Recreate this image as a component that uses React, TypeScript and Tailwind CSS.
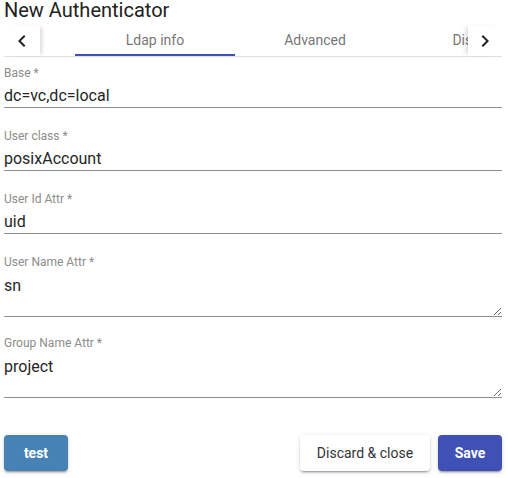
import React from 'react';

const tabs = ['Ldap info', 'Advanced', 'Display'];

function ChevronLeftIcon() {
  return (
    <svg width="24" height="24" viewBox="0 0 24 24" fill="#222">
      <path d="M15.41 7.41L14 6l-6 6 6 6 1.41-1.41L10.83 12z" />
    </svg>
  );
}

function ChevronRightIcon() {
  return (
    <svg width="24" height="24" viewBox="0 0 24 24" fill="#222">
      <path d="M10 6L8.59 7.41 13.17 12l-4.58 4.59L10 18l6-6z" />
    </svg>
  );
}

function TextField({ label, value, className }: { label: string; value: string; className?: string }) {
  return (
    <div className={`flex flex-col ${className ?? ''}`}>
      <label className="h-[14px] text-[12px] leading-[14px] text-[#8c8c8c]">{label}</label>
      <input
        type="text"
        defaultValue={value}
        className="mt-[6px] h-[22px] w-full border-b border-[#8f8f8f] pb-[2px] text-[16px] leading-[19px] text-[#262626] outline-none"
      />
    </div>
  );
}

function TextAreaField({ label, value, className }: { label: string; value: string; className?: string }) {
  return (
    <div className={`flex flex-col ${className ?? ''}`}>
      <label className="h-[14px] text-[12px] leading-[14px] text-[#8c8c8c]">{label}</label>
      <textarea
        defaultValue={value}
        className="mt-[6px] h-[42px] w-full resize-y border-b border-[#8f8f8f] pt-[1px] text-[16px] leading-[19px] text-[#262626] outline-none"
      />
    </div>
  );
}

export default function App() {
  const btnShadow =
    'shadow-[0_3px_1px_-2px_rgba(0,0,0,0.2),0_2px_2px_0_rgba(0,0,0,0.14),0_1px_5px_0_rgba(0,0,0,0.12)]';

  return (
    <div
      className="flex h-[478px] w-[508px] flex-col overflow-hidden bg-white pl-1 pr-[6px]"
      style={{ fontFamily: 'Roboto, "Liberation Sans", sans-serif' }}
    >
      <h1 className="h-[25px] text-[20px] leading-5 font-normal text-[#222]">New Authenticator</h1>

      {/* Tab bar */}
      <div className="flex h-[32px] border-b border-[#e0e0e0]">
        <button className="relative z-10 flex h-[31px] w-[36px] items-center justify-center bg-white shadow-[4px_0_4px_-2px_rgba(0,0,0,0.15)]">
          <ChevronLeftIcon />
        </button>
        <div className="flex flex-1 overflow-hidden pl-[35px]">
          {tabs.map((tab, i) => (
            <div
              key={tab}
              className="relative flex h-[31px] w-[160px] shrink-0 items-center justify-center text-[14px] text-[#777]"
            >
              {tab}
              {i === 0 && <div className="absolute bottom-0 left-0 h-[2px] w-full bg-[#3f51b5]" />}
            </div>
          ))}
        </div>
        <button className="relative z-10 flex h-[31px] w-[34px] items-center justify-center bg-white shadow-[-4px_0_4px_-2px_rgba(0,0,0,0.15)]">
          <ChevronRightIcon />
        </button>
      </div>

      {/* Fields */}
      <div className="flex flex-col pt-[9px]">
        <TextField label="Base *" value="dc=vc,dc=local" />
        <TextField label="User class *" value="posixAccount" className="mt-[21px]" />
        <TextField label="User Id Attr *" value="uid" className="mt-[21px]" />
        <TextAreaField label="User Name Attr *" value="sn" className="mt-[21px]" />
        <TextAreaField label="Group Name Attr *" value="project" className="mt-[19px]" />
      </div>

      {/* Actions */}
      <div className="mt-[37px] flex items-center">
        <button className={`h-[36px] w-[64px] rounded bg-[#4682b4] text-[14px] font-bold text-white ${btnShadow}`}>
          test
        </button>
        <div className="ml-auto flex gap-2">
          <button className={`h-[36px] w-[130px] rounded bg-white text-[14px] font-normal text-[#333] ${btnShadow}`}>
            Discard &amp; close
          </button>
          <button className={`h-[36px] w-[64px] rounded bg-[#3f51b5] text-[14px] font-bold text-white ${btnShadow}`}>
            Save
          </button>
        </div>
      </div>
    </div>
  );
}
